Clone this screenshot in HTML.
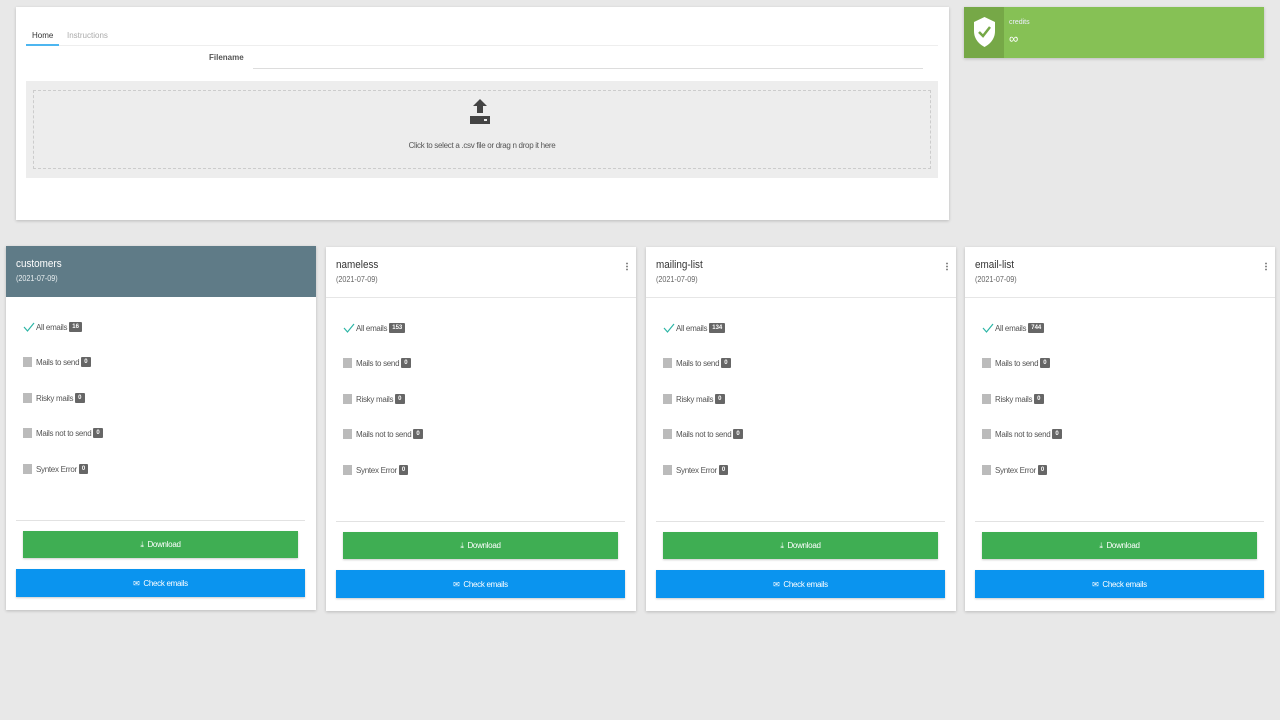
<!DOCTYPE html>
<html><head><meta charset="utf-8"><style>
*{box-sizing:border-box;margin:0;padding:0}
body{width:1280px;height:720px;background:#e8e8e8;font-family:"Liberation Sans Narrow","Liberation Sans",sans-serif;color:#555;position:relative;overflow:hidden}
.abs{position:absolute}
.top{left:16px;top:7px;width:933px;height:213px;background:#fff;box-shadow:0 1px 3px rgba(0,0,0,.2)}
.tabs{left:10px;top:22px;width:912px;height:17px;border-bottom:1px solid #eee;font-size:8px}
.credit{left:964px;top:7px;width:300px;height:51px;background:#86c155;box-shadow:0 1px 3px rgba(0,0,0,.2)}
.card{top:246px;width:310px;height:364px;background:#fff;box-shadow:0 1px 3px rgba(0,0,0,.2)}
.hd{position:absolute;left:0;top:0;width:100%;height:51px;border-bottom:1px solid #e6e6e6}
.hd .t{position:absolute;left:10px;top:12px;font-size:11px;color:#333;transform:scaleX(.9);transform-origin:left}
.hd .d{position:absolute;left:10px;top:28px;font-size:8px;color:#666;transform:scaleX(.9);transform-origin:left}
.dots{position:absolute;right:8px;top:15px;width:2px;height:9px;background:radial-gradient(circle,#888 1px,transparent 1px) 0 0/2px 3px}
.row{position:absolute;left:17px;font-size:8px;color:#555;display:flex;align-items:center;height:12px;letter-spacing:-.3px}
.cb{width:9px;height:10px;background:#bbb;margin-right:4px}
.badge{background:#666;color:#fff;font-size:6px;font-weight:bold;padding:2px 3px;margin-left:2px;border-radius:1px;letter-spacing:0}
.chk{width:12px;height:10px;margin-right:1px}
.sep{position:absolute;left:10px;width:289px;top:274px;height:1px;background:#e2e2e2}
.dl{position:absolute;left:17px;top:285px;width:275px;height:27px;background:#3fae53;color:#fff;font-size:8px;display:flex;align-items:center;justify-content:center;box-shadow:0 1px 2px rgba(0,0,0,.2);letter-spacing:-.3px}
.ce{position:absolute;left:10px;top:323px;width:289px;height:28px;background:#0a94ef;color:#fff;font-size:8px;display:flex;align-items:center;justify-content:center;box-shadow:0 1px 2px rgba(0,0,0,.2);letter-spacing:-.3px}
</style></head><body>
<div class="abs top">
 <div class="abs tabs"><span class="abs" style="left:6px;top:2px;color:#333">Home</span><span class="abs" style="left:41px;top:2px;color:#aaa">Instructions</span><div class="abs" style="left:0;top:15px;width:33px;height:2px;background:#4db6f0"></div></div>
 <div class="abs" style="left:193px;top:46px;font-size:8px;font-weight:bold;color:#555">Filename</div>
 <div class="abs" style="left:237px;top:61px;width:670px;height:1px;background:#ddd"></div>
 <div class="abs" style="left:10px;top:74px;width:912px;height:97px;background:#ededed">
  <div class="abs" style="left:7px;top:9px;width:898px;height:79px;border:1px dashed #ccc"></div>
  <svg class="abs" style="left:444px;top:18px" width="20" height="25" viewBox="0 0 20 25"><path d="M10 0 L17 7 H13 V14 H7 V7 H3 Z" fill="#444"/><rect x="0" y="17" width="20" height="8" fill="#444"/><rect x="14" y="20" width="3" height="2" fill="#eee"/></svg>
  <div class="abs" style="left:0;width:912px;top:60px;text-align:center;font-size:8px;color:#555;letter-spacing:-.3px">Click to select a .csv file or drag n drop it here</div>
 </div>
</div>
<div class="abs credit">
 <div class="abs" style="left:0;top:0;width:40px;height:51px;background:#76a847"></div>
 <svg class="abs" style="left:10px;top:10px" width="21" height="30" viewBox="0 0 21 30"><path d="M10.5 0 L21 5 V14 C21 22 16 27 10.5 30 C5 27 0 22 0 14 V5 Z" fill="#fff"/><path d="M5 15 L9 19 L16 10" stroke="#76a847" stroke-width="2.5" fill="none"/></svg>
 <div class="abs" style="left:45px;top:12px;font-size:7px;color:#eef">credits</div>
 <div class="abs" style="left:45px;top:24px;font-size:13px;color:#fff">∞</div>
</div>

<div class="abs card" style="left:6px">
 <div class="hd" style="background:#5f7b87;border:none"><div class="t" style="color:#fff">customers</div><div class="d" style="color:#e8eef0">(2021-07-09)</div></div>
 <div class="row" style="top:75px"><svg class="chk" viewBox="0 0 12 10"><path d="M1 5 L4.5 9 L11 1" stroke="#2bb5a5" stroke-width="1.2" fill="none"/></svg>All emails<span class="badge">16</span></div>
 <div class="row" style="top:110px"><span class="cb"></span>Mails to send<span class="badge">0</span></div>
 <div class="row" style="top:146px"><span class="cb"></span>Risky mails<span class="badge">0</span></div>
 <div class="row" style="top:181px"><span class="cb"></span>Mails not to send<span class="badge">0</span></div>
 <div class="row" style="top:217px"><span class="cb"></span>Syntex Error<span class="badge">0</span></div>
 <div class="sep"></div>
 <div class="dl">⤓&nbsp; Download</div>
 <div class="ce">✉&nbsp; Check emails</div>
</div>
<div class="abs card" style="left:326px;top:247px">
 <div class="hd"><div class="t">nameless</div><div class="d">(2021-07-09)</div><div class="dots"></div></div>
 <div class="row" style="top:75px"><svg class="chk" viewBox="0 0 12 10"><path d="M1 5 L4.5 9 L11 1" stroke="#2bb5a5" stroke-width="1.2" fill="none"/></svg>All emails<span class="badge">153</span></div>
 <div class="row" style="top:110px"><span class="cb"></span>Mails to send<span class="badge">0</span></div>
 <div class="row" style="top:146px"><span class="cb"></span>Risky mails<span class="badge">0</span></div>
 <div class="row" style="top:181px"><span class="cb"></span>Mails not to send<span class="badge">0</span></div>
 <div class="row" style="top:217px"><span class="cb"></span>Syntex Error<span class="badge">0</span></div>
 <div class="sep"></div>
 <div class="dl">⤓&nbsp; Download</div>
 <div class="ce">✉&nbsp; Check emails</div>
</div>
<div class="abs card" style="left:646px;top:247px">
 <div class="hd"><div class="t">mailing-list</div><div class="d">(2021-07-09)</div><div class="dots"></div></div>
 <div class="row" style="top:75px"><svg class="chk" viewBox="0 0 12 10"><path d="M1 5 L4.5 9 L11 1" stroke="#2bb5a5" stroke-width="1.2" fill="none"/></svg>All emails<span class="badge">134</span></div>
 <div class="row" style="top:110px"><span class="cb"></span>Mails to send<span class="badge">0</span></div>
 <div class="row" style="top:146px"><span class="cb"></span>Risky mails<span class="badge">0</span></div>
 <div class="row" style="top:181px"><span class="cb"></span>Mails not to send<span class="badge">0</span></div>
 <div class="row" style="top:217px"><span class="cb"></span>Syntex Error<span class="badge">0</span></div>
 <div class="sep"></div>
 <div class="dl">⤓&nbsp; Download</div>
 <div class="ce">✉&nbsp; Check emails</div>
</div>
<div class="abs card" style="left:965px;top:247px">
 <div class="hd"><div class="t">email-list</div><div class="d">(2021-07-09)</div><div class="dots"></div></div>
 <div class="row" style="top:75px"><svg class="chk" viewBox="0 0 12 10"><path d="M1 5 L4.5 9 L11 1" stroke="#2bb5a5" stroke-width="1.2" fill="none"/></svg>All emails<span class="badge">744</span></div>
 <div class="row" style="top:110px"><span class="cb"></span>Mails to send<span class="badge">0</span></div>
 <div class="row" style="top:146px"><span class="cb"></span>Risky mails<span class="badge">0</span></div>
 <div class="row" style="top:181px"><span class="cb"></span>Mails not to send<span class="badge">0</span></div>
 <div class="row" style="top:217px"><span class="cb"></span>Syntex Error<span class="badge">0</span></div>
 <div class="sep"></div>
 <div class="dl">⤓&nbsp; Download</div>
 <div class="ce">✉&nbsp; Check emails</div>
</div>
</body></html>
